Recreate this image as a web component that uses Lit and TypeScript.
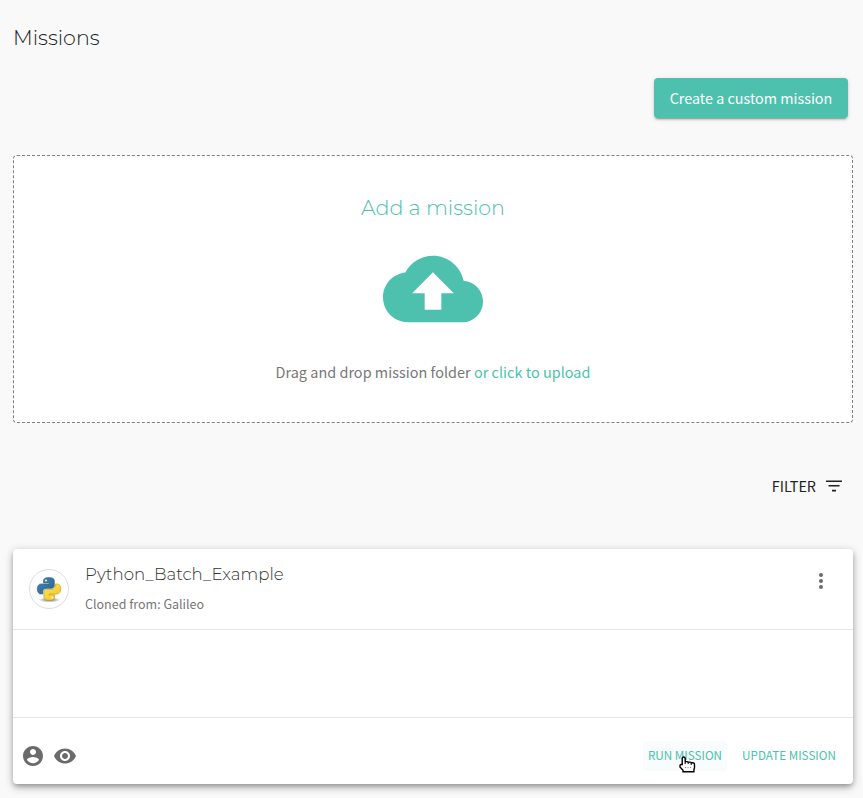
import { LitElement, html, css } from "lit";
import { customElement } from "lit/decorators.js";

@customElement("python-logo")
class PythonLogo extends LitElement {
  static styles = css`
    :host { display: block; width: 24px; height: 25px; }
    svg { display: block; overflow: visible; }
  `;
  render() {
    return html`<svg width="24" height="25" viewBox="0 0 24 25">
      <defs>
        <linearGradient id="b" x1="0" y1="0" x2="1" y2="1"><stop offset="0" stop-color="#4685b7"/><stop offset="1" stop-color="#2b608c"/></linearGradient>
        <linearGradient id="y" x1="0" y1="0" x2="1" y2="1"><stop offset="0" stop-color="#ffe35c"/><stop offset="1" stop-color="#f2c51f"/></linearGradient>
        <radialGradient id="s"><stop offset="0" stop-color="#444" stop-opacity=".9"/><stop offset="1" stop-color="#777" stop-opacity="0"/></radialGradient>
      </defs>
      <ellipse cx="12.5" cy="22.8" rx="11" ry="2.8" fill="url(#s)"/>
      <path fill="url(#b)" stroke="#34658d" stroke-width=".6" d="M11.600.5C8.200.5 6.500 1.600 6.500 3.600V6h5.700v.9H4C1.700 6.900.3 8.900.3 12s1.400 5 3.500 5h2.100v-2.500c0-1.800 1.500-3.100 3.300-3.100h5.300c1.600 0 2.900-1.200 2.900-2.800v-5C17.400 1.500 15 .5 11.600.5z"/>
      <path fill="url(#y)" stroke="#bca02b" stroke-width=".7" d="M18.200 7h2c2.200 0 3.500 1.900 3.500 4.800s-1.400 5.200-3.500 5.200h-8.200v.8h5.600v2.400c0 2-2.100 3.100-5.200 3.100s-5.500-1.100-5.500-3.100v-5c0-1.700 1.400-2.900 3-2.900h5.300c1.700 0 3-1.400 3-3z"/>
      <circle cx="9" cy="3.400" r="1" fill="#f4faff"/><circle cx="15.300" cy="20.400" r="1" fill="#fff9d8"/>
    </svg>`;
  }
}

@customElement("app-root")
class AppRoot extends LitElement {
  static styles = css`
    :host {
      display: block; box-sizing: border-box; height: 798px; padding: 0 10px 0 13px;
      background: #f9f9f9; overflow: hidden;
      font-family: "Noto Sans CJK JP", sans-serif; font-size: 14.4px; color: #222;
    }
    * { box-sizing: border-box; }
    svg { display: block; }
    h1, h2, h3, p { margin: 0; font-weight: 300; white-space: nowrap; }
    h1, h2, h3 { font-family: Montserrat, Inter, sans-serif; }
    h1 { padding-top: 23px; height: 78px; font-size: 20.6px; line-height: 30px; }
    .actions { display: flex; justify-content: flex-end; padding-right: 5px; height: 77px; }
    button { border: 0; background: none; padding: 0; font: inherit; white-space: nowrap; }
    .create {
      width: 194px; height: 40px; border-radius: 4px; background: #4dc1ad; color: #fff; font-size: 14.35px; line-height: 40px;
      box-shadow: 0 3px 1px -2px rgba(0,0,0,.2), 0 2px 2px rgba(0,0,0,.14), 0 1px 5px rgba(0,0,0,.12);
    }
    .drop {
      height: 268px; border: 1px dashed #808080; border-radius: 4px; background: #fff;
      display: flex; flex-direction: column; align-items: center; padding-top: 36px;
    }
    h2 { font-size: 20.6px; line-height: 32px; color: #4dc1ad; }
    .cloud { margin-top: 15px; width: 100px; height: 100px; fill: #4dc1ad; }
    .hint { margin-top: 21px; line-height: 24px; color: #777; font-weight: 400; letter-spacing: .04px; }
    .hint span { color: #4dc1ad; }
    .filter { display: flex; justify-content: flex-end; align-items: center; height: 126px; padding-right: 10px; gap: 9px; line-height: 20px; }
    .filter span { padding-bottom: 1px; }
    .filter svg { width: 18px; fill: #222; }
    .card {
      height: 235px; border-radius: 4px; background: #fff; display: flex; flex-direction: column;
      box-shadow: 0 3px 5px -1px rgba(0,0,0,.25), 0 4px 8px rgba(0,0,0,.17), 0 1px 10px rgba(0,0,0,.12);
    }
    .head { display: flex; height: 81px; padding: 0 20px 0 16px; border-bottom: 1px solid #e6e6e6; }
    .avatar { width: 40px; height: 40px; margin: 20px 16px 0 0; border: 1px solid #ddd; border-radius: 50%; display: flex; align-items: center; justify-content: center; }
    .info { flex: 1; }
    h3 { margin-top: 13px; font-size: 16.640px; line-height: 24px; color: #333; }
    .sub { margin-top: 8px; font-size: 12.5px; line-height: 20px; color: #777; font-weight: 400; }
    .more { margin-top: 20px; width: 24px; height: 24px; fill: #6b6b6b; }
    .body { height: 88px; border-bottom: 1px solid #e6e6e6; }
    .foot { flex: 1; display: flex; align-items: center; padding: 10px 13px 0 8px; }
    .foot > svg { width: 24px; height: 24px; fill: #6b6b6b; margin-right: 8px; }
    .grow { flex: 1; }
    .link { position: relative; height: 30px; padding: 0 0 2px; border-radius: 4px; color: #4dc1ad; font-size: 11.7px; line-height: 28px; }
    .run { width: 84px; background: #f8fcfc; }
    .update { width: 102px; margin-left: 11px; }
    .pointer { position: absolute; left: 36px; top: 15px; width: 17px; height: 17px; }
  `;
  render() {
    return html`
      <h1>Missions</h1>
      <div class="actions"><button class="create">Create a custom mission</button></div>
      <section class="drop">
        <h2>Add a mission</h2>
        <svg class="cloud" viewBox="0 0 24 24"><path d="M19.350 10.040C18.670 6.590 15.640 4 12 4 9.110 4 6.600 5.640 5.350 8.040 2.340 8.360 0 10.910 0 14c0 3.310 2.690 6 6 6h13c2.760 0 5-2.240 5-5 0-2.640-2.050-4.780-4.650-4.960zM14 13v4h-4v-4H7l5-5 5 5h-3z"/></svg>
        <p class="hint">Drag and drop mission folder <span>or click to upload</span></p>
      </section>
      <div class="filter"><span>FILTER</span>
        <svg viewBox="0 0 18 12" height="12"><path d="M1 .4h16v1.600H1zM3.500 5h11v1.600h-11zM7 9.800h4v1.600H7z"/></svg>
      </div>
      <article class="card">
        <div class="head">
          <div class="avatar"><python-logo></python-logo></div>
          <div class="info"><h3>Python_Batch_Example</h3><p class="sub">Cloned from: Galileo</p></div>
          <svg class="more" viewBox="0 0 24 24"><circle cx="12" cy="6" r="2"/><circle cx="12" cy="12" r="2"/><circle cx="12" cy="18" r="2"/></svg>
        </div>
        <div class="body"></div>
        <div class="foot">
          <svg viewBox="0 0 24 24"><path d="M12 2C6.480 2 2 6.480 2 12s4.480 10 10 10 10-4.480 10-10S17.520 2 12 2zm0 3c1.660 0 3 1.340 3 3s-1.340 3-3 3-3-1.340-3-3 1.340-3 3-3zm0 14.200c-2.500 0-4.710-1.280-6-3.220.03-1.990 4-3.080 6-3.080 1.990 0 5.970 1.090 6 3.080-1.290 1.940-3.500 3.220-6 3.220z"/></svg>
          <svg viewBox="0 0 24 24"><path d="M12 4.500C7 4.500 2.730 7.610 1 12c1.730 4.390 6 7.500 11 7.500s9.270-3.110 11-7.500c-1.730-4.390-6-7.500-11-7.500zM12 17c-2.760 0-5-2.240-5-5s2.240-5 5-5 5 2.240 5 5-2.240 5-5 5zm0-8c-1.660 0-3 1.340-3 3s1.340 3 3 3 3-1.340 3-3-1.340-3-3-3z"/></svg>
          <div class="grow"></div>
          <button class="link run">RUN MISSION
            <svg class="pointer" viewBox="0 0 17 17"><path d="M4.500 1c1 0 1.700.5 1.700 1.600v3h2c.5 0 .8.200 1 .5h2c.5 0 .8.200 1 .6h1.500c1.300 0 1.800.7 1.800 1.800v3c0 1-.6 1.600-.6 2.700v1.600H4v-1.600L1 11V9.500c0-.8.500-1 1.200-1h1V2.600C3.200 1.500 3.700 1 4.500 1z" fill="#fff" stroke="#000" stroke-width="1.400"/><path d="M6.200 6v2M9.200 6v2M12.200 7v2" stroke="#000"/><path d="M6 11.500h1M8.500 11.500h1M11 11.500h1" stroke="#888"/></svg>
          </button>
          <button class="link update">UPDATE MISSION</button>
        </div>
      </article>`;
  }
}
